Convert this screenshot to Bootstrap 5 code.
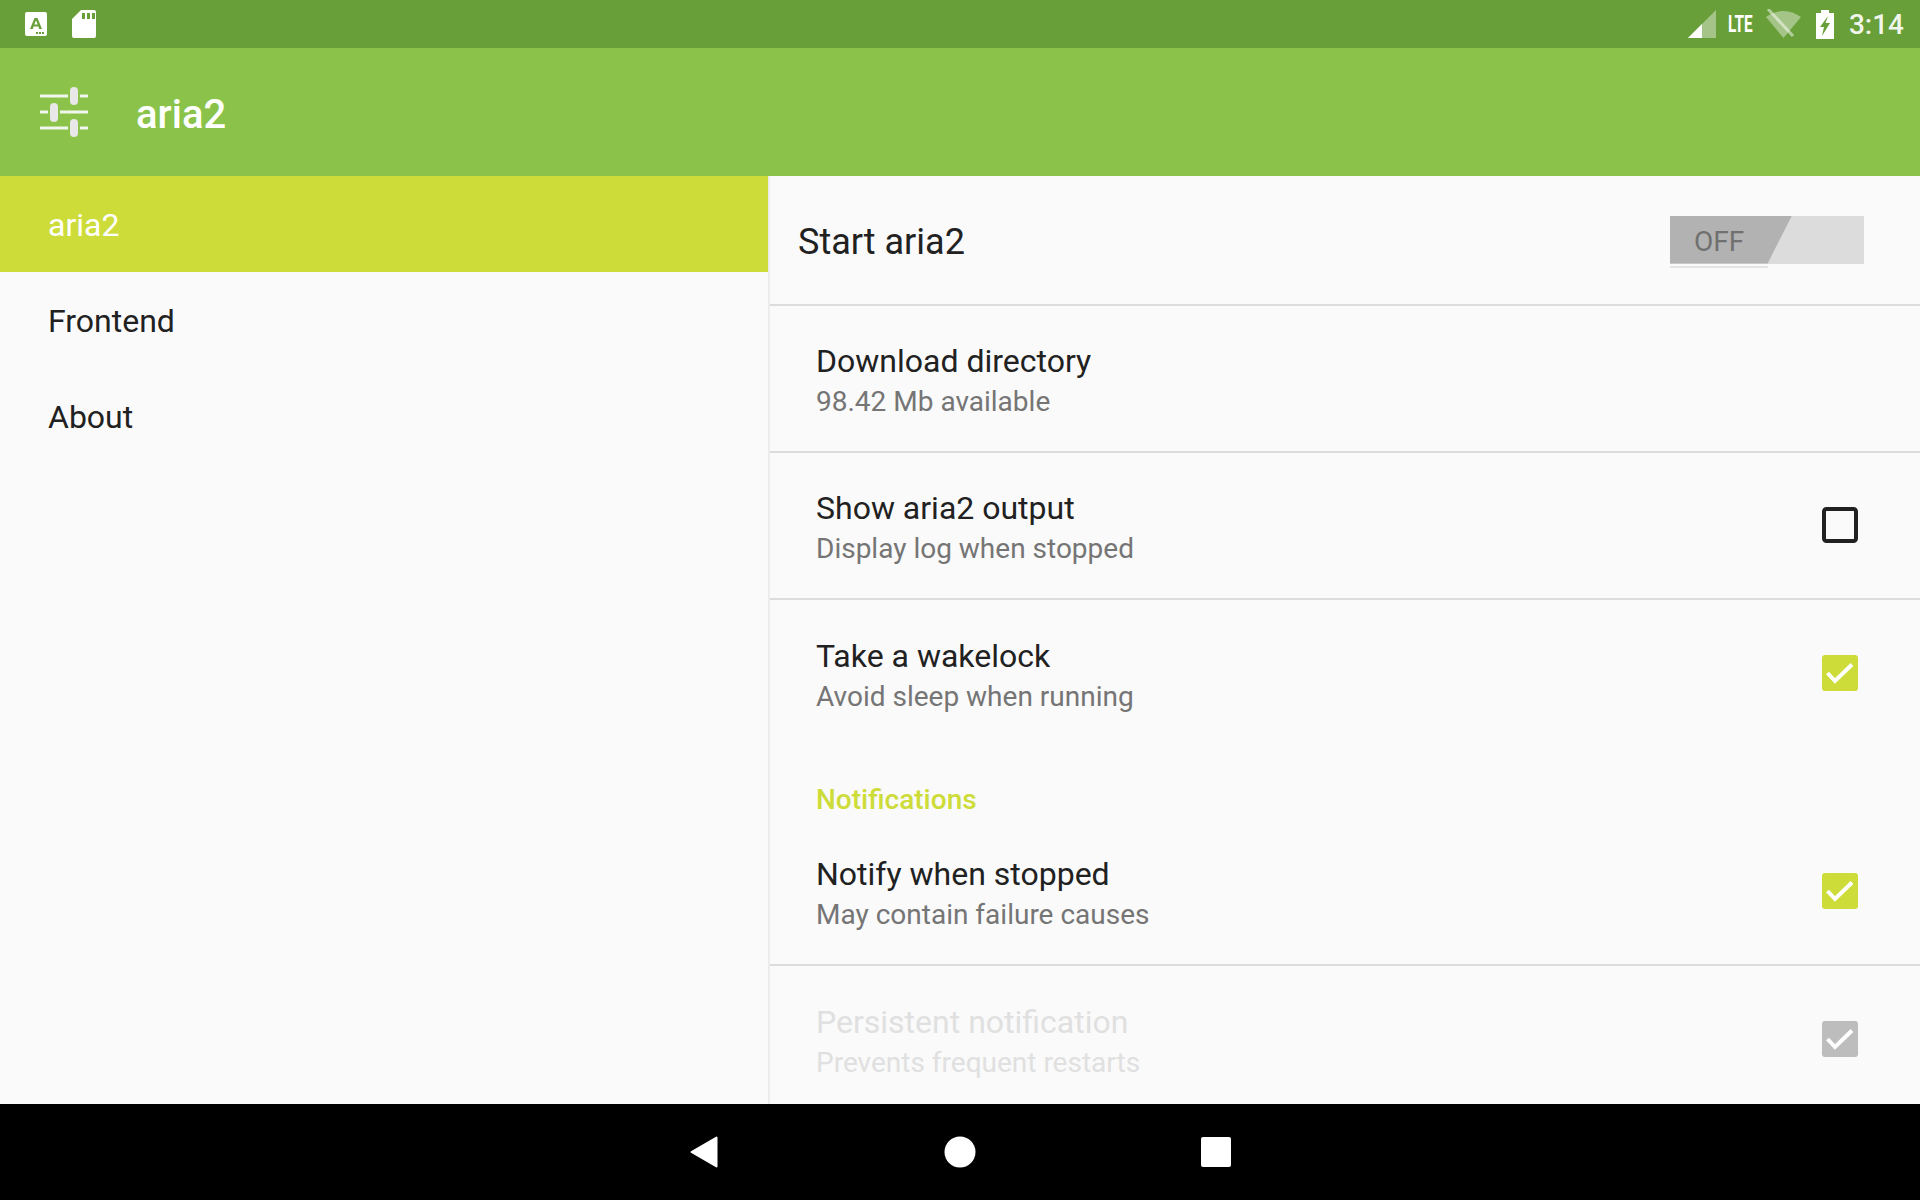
<!DOCTYPE html>
<html lang="en">
<head>
  <meta charset="UTF-8">
  <title>aria2</title>
  <link href="https://cdn.jsdelivr.net/npm/bootstrap@5.3.0/dist/css/bootstrap.min.css" rel="stylesheet">
  <style>
    html, body { height: 100%; }
    body { width: 1920px; height: 1200px; overflow: hidden; font-family: Roboto, "Liberation Sans", sans-serif; background: #fafafa; color: #212121; }
    .status-strip { height: 48px; background: #689f38; padding: 0 16px 0 24px; color: #fff; }
    .status-time { font-size: 28px; font-weight: 500; line-height: 48px; color: #f1f6ec; margin-left: 15px; margin-top: 2px; }
    .lte-wrap { width: 29px; margin-left: 12px; overflow: visible; white-space: nowrap; }
    .lte-text { display: inline-block; font-size: 24px; font-weight: 700; transform: scaleX(.64); transform-origin: left center; }
    .wifi-icon { margin-left: 9px; }
    .batt-icon { margin-left: 15px; }
    .app-bar { height: 128px; background: #8bc34a; padding-left: 40px; }
    .app-name { font-size: 40px; font-weight: 500; color: #fff; margin-left: 48px; margin-top: 6px; }
    .content-area { height: 928px; }
    .side-pane { width: 768px; flex: none; }
    .side-item { height: 96px; padding-left: 48px; font-size: 32px; line-height: 98px; color: #212121; }
    .side-item.is-on { background: #cddc39; color: #fff; }
    .main-pane { flex: 1; border-left: 2px solid #ececec; overflow: hidden; }
    .master-row { height: 130px; padding: 0 56px 0 28px; border-bottom: 2px solid #dcdcdc; }
    .master-title { font-size: 36px; margin-top: 4px; }
    .toggle-box { width: 194px; position: relative; height: 48px; background: #dcdcdc; margin-top: -1px; }
    .toggle-thumb { position: absolute; left: 0; top: 0; width: 122px; height: 48px; background: #b2b2b2; clip-path: polygon(0 0, 100% 0, 80% 100%, 0 100%); font-size: 28px; color: #707070; line-height: 52px; padding-left: 24px; }
    .toggle-line { position: absolute; left: 0; top: 50px; width: 98px; height: 2px; background: #e4e4e4; }
    .pref-row { height: 147px; padding: 0 62px 0 46px; border-bottom: 2px solid #dcdcdc; }
    .pref-row.no-line { border-bottom: 0; }
    .pref-text { margin-top: 2px; }
    .pref-title { font-size: 32px; line-height: 44px; }
    .pref-sub { font-size: 28px; line-height: 38px; color: #757575; }
    .is-off .pref-title, .is-off .pref-sub { color: #e0e0e0; }
    .group-label { height: 72px; padding: 36px 46px 0; font-size: 28px; font-weight: 500; color: #cddc39; line-height: 34px; }
    .tick-box { width: 36px; height: 36px; flex: none; display: block; margin-bottom: 2px; }
    .nav-strip { height: 96px; background: #000; }
    .nav-slot { width: 256px; text-align: center; }
  </style>
</head>
<body>
  <div class="status-strip d-flex align-items-center">
    <svg width="24" height="24" viewBox="0 0 24 24" class="me-4"><rect x="1" y="0" width="22" height="24" rx="2" fill="#fff"/><path d="M6 17 10.500 6h3L18 17h-2.800l-.8-2.400h-4.800L8.800 17zM10.300 12.400h3.400L12 8.200z" fill="#689f38"/><path d="M12 20h2v2h-2zM15 20h2v2h-2zM18 20h2v2h-2z" fill="#689f38"/></svg>
    <svg width="24" height="30" viewBox="0 0 24 30"><path d="M9 1h13a2 2 0 0 1 2 2v24a2 2 0 0 1-2 2H2a2 2 0 0 1-2-2V10z" fill="#fff"/><path d="M10 4h3v6h-3zM15 4h3v6h-3zM20 4h3v6h-3z" fill="#689f38"/></svg>
    <div class="ms-auto d-flex align-items-center">
      <svg width="28" height="28" viewBox="0 0 28 28"><path d="M0 28 28 0v28z" fill="#fff" opacity=".4"/><path d="M0 28 14 14v14z" fill="#fff"/></svg>
      <div class="lte-wrap"><span class="lte-text">LTE</span></div>
      <svg width="35" height="30" viewBox="0 0 35 30" class="wifi-icon"><path d="M0 8Q17.500-4 35 8L17.500 29z" fill="#fff" opacity=".4"/><path d="M2 0 27 27" stroke="#fff" stroke-opacity=".5" stroke-width="3"/></svg>
      <svg width="18" height="29" viewBox="0 0 18 29" class="batt-icon"><path d="M5 0h8v3h5v26H0V3h5z" fill="#fff"/><path d="M12 6 4 17h4l-2 9 8-13H9.500z" fill="#689f38"/></svg>
      <span class="status-time">3:14</span>
    </div>
  </div>

  <div class="app-bar d-flex align-items-center">
    <svg width="48" height="50" viewBox="0 0 48 50">
      <path d="M0 9h28M40 9h8M0 25h8M20 25h28M0 41h28M40 41h8" stroke="#f1f6ec" stroke-width="3"/>
      <rect x="30" y="0" width="8" height="18" rx="4" fill="#e8e8e8"/>
      <rect x="10" y="16" width="8" height="19" rx="4" fill="#e8e8e8"/>
      <rect x="30" y="32" width="8" height="18" rx="4" fill="#e8e8e8"/>
    </svg>
    <span class="app-name">aria2</span>
  </div>

  <div class="content-area d-flex">
    <div class="side-pane">
      <div class="side-item is-on">aria2</div>
      <div class="side-item">Frontend</div>
      <div class="side-item">About</div>
    </div>
    <div class="main-pane">
      <div class="master-row d-flex align-items-center justify-content-between">
        <span class="master-title">Start aria2</span>
        <div class="toggle-box">
          <div class="toggle-thumb">OFF</div>
          <div class="toggle-line"></div>
        </div>
      </div>
      <div class="pref-row d-flex align-items-center justify-content-between">
        <div class="pref-text"><div class="pref-title">Download directory</div><div class="pref-sub">98.42 Mb available</div></div>
      </div>
      <div class="pref-row d-flex align-items-center justify-content-between">
        <div class="pref-text"><div class="pref-title">Show aria2 output</div><div class="pref-sub">Display log when stopped</div></div>
        <svg class="tick-box" viewBox="0 0 36 36"><rect x="2" y="2" width="32" height="32" rx="2.500" fill="none" stroke="#212121" stroke-width="4"/></svg>
      </div>
      <div class="pref-row no-line d-flex align-items-center justify-content-between">
        <div class="pref-text"><div class="pref-title">Take a wakelock</div><div class="pref-sub">Avoid sleep when running</div></div>
        <svg class="tick-box" viewBox="0 0 36 36"><rect width="36" height="36" rx="3" fill="#cddc39"/><path d="M5.500 18l7.500 8L30 9.500" fill="none" stroke="#fff" stroke-width="4"/></svg>
      </div>
      <div class="group-label">Notifications</div>
      <div class="pref-row d-flex align-items-center justify-content-between">
        <div class="pref-text"><div class="pref-title">Notify when stopped</div><div class="pref-sub">May contain failure causes</div></div>
        <svg class="tick-box" viewBox="0 0 36 36"><rect width="36" height="36" rx="3" fill="#cddc39"/><path d="M5.500 18l7.500 8L30 9.500" fill="none" stroke="#fff" stroke-width="4"/></svg>
      </div>
      <div class="pref-row no-line is-off d-flex align-items-center justify-content-between">
        <div class="pref-text"><div class="pref-title">Persistent notification</div><div class="pref-sub">Prevents frequent restarts</div></div>
        <svg class="tick-box" viewBox="0 0 36 36"><rect width="36" height="36" rx="3" fill="#bdbdbd"/><path d="M5.500 18l7.500 8L30 9.500" fill="none" stroke="#fff" stroke-width="4"/></svg>
      </div>
    </div>
  </div>

  <div class="nav-strip d-flex align-items-center justify-content-center">
    <div class="nav-slot"><svg width="28" height="32" viewBox="0 0 28 32"><path d="M26.500 1.500v29L1.500 16z" fill="#fff" stroke="#fff" stroke-width="2" stroke-linejoin="round"/></svg></div>
    <div class="nav-slot"><svg width="32" height="32" viewBox="0 0 32 32"><circle cx="16" cy="16" r="15.500" fill="#fff"/></svg></div>
    <div class="nav-slot"><svg width="30" height="30" viewBox="0 0 30 30"><rect width="30" height="30" rx="2" fill="#fff"/></svg></div>
  </div>

  <script src="https://cdn.jsdelivr.net/npm/bootstrap@5.3.0/dist/js/bootstrap.bundle.min.js"></script>
</body>
</html>
